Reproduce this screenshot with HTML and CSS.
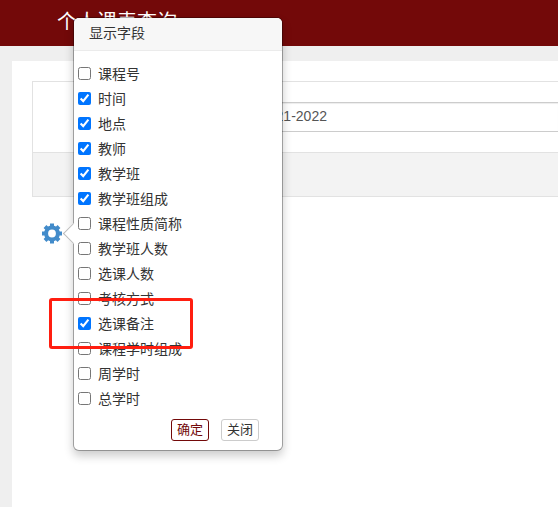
FILE: index.html
```html
<!DOCTYPE html>
<html lang="zh-CN">

<head>
    <meta charset="utf-8" />
    <title>个人课表查询</title>
    <link rel="stylesheet" href="styles.css">
</head>

<body>
    <header class="navbar">
        <h1>个人课表查询</h1>
    </header>
    <main class="page">
        <form class="search">
            <div class="search-body">
                <input class="year" type="text" value="2021-2022" aria-label="学年">
            </div>
            <div class="search-footer"></div>
        </form>
        <div class="setting">
            <button class="gear" type="button" aria-label="显示字段">
                <svg width="22" height="22" viewBox="0 0 22 22" fill="none" stroke="#428bca">
                    <circle cx="11" cy="10.500" r="5.900" stroke-width="4" />
                    <path stroke-width="4" d="M11 .5v4M11 16.500v4M1 10.500h4M17 10.500h4M4 3.500l3 3M15 14.500l3 3M18 3.500l-3 3M7 14.500l-3 3" />
                </svg>
            </button>
            <div class="popover">
                <h3>显示字段</h3>
                <ul class="fields">
                    <li><label><input type="checkbox">课程号</label></li>
                    <li><label><input type="checkbox" checked>时间</label></li>
                    <li><label><input type="checkbox" checked>地点</label></li>
                    <li><label><input type="checkbox" checked>教师</label></li>
                    <li><label><input type="checkbox" checked>教学班</label></li>
                    <li><label><input type="checkbox" checked>教学班组成</label></li>
                    <li><label><input type="checkbox">课程性质简称</label></li>
                    <li><label><input type="checkbox">教学班人数</label></li>
                    <li><label><input type="checkbox">选课人数</label></li>
                    <li><label><input type="checkbox">考核方式</label></li>
                    <li class="marked"><label><input type="checkbox" checked>选课备注</label></li>
                    <li><label><input type="checkbox">课程学时组成</label></li>
                    <li><label><input type="checkbox">周学时</label></li>
                    <li><label><input type="checkbox">总学时</label></li>
                </ul>
                <div class="actions">
                    <button class="btn btn-ok" type="button">确定</button>
                    <button class="btn" type="button">关闭</button>
                </div>
            </div>
        </div>
    </main>
</body>

</html>
```

FILE: styles.css
```css
*,
*::before,
*::after {
    box-sizing: border-box;
    margin: 0;
    padding: 0;
}

body {
    min-height: 100vh;
    display: flex;
    flex-direction: column;
    overflow-x: hidden;
    background: #efefef;
    color: #333;
    font-family: "Liberation Sans", "Noto Sans CJK SC", sans-serif;
    font-size: 14px;
    line-height: 20px;
}

.navbar {
    height: 46px;
    padding: 7px 57px;
    background: #730909;
    color: #fff;
}

.navbar h1 {
    font-size: 20px;
    font-weight: normal;
    line-height: 30px;
}

.page {
    flex: 1;
    margin: 15px 0 0 12px;
    padding: 20px 0 0 20px;
    background: #fff;
}

.search {
    border: 1px solid #e2e2e2;
    border-right: none;
}

.search-body {
    padding: 20px 0 20px 214px;
}

.year {
    display: block;
    width: 100%;
    height: 30px;
    padding: 0 12px 2px;
    border: 1px solid #ccc;
    border-right: none;
    box-shadow: inset 0 1px 1px rgba(0, 0, 0, 0.075);
    color: #555;
    font: inherit;
}

.search-footer {
    height: 44px;
    border-top: 1px solid #e2e2e2;
    background: #f3f3f3;
}

.setting {
    position: relative;
    width: 32px;
    margin: 26px 0 0 9px;
}

.gear {
    display: block;
    border: none;
    background: none;
    cursor: pointer;
}

.gear svg {
    display: block;
}

/* field picker, opens to the right of the gear */
.popover {
    position: absolute;
    left: 100%;
    top: 50%;
    transform: translateY(-50%);
    width: 210px;
    border: 1px solid rgba(0, 0, 0, 0.3);
    border-radius: 6px;
    background: #fff;
    background-clip: padding-box;
    box-shadow: 0 5px 10px rgba(0, 0, 0, 0.2);
}

.popover::before {
    content: "";
    position: absolute;
    left: -8px;
    top: 50%;
    width: 15px;
    height: 15px;
    margin-top: -8px;
    border: solid #bbb;
    border-width: 0 0 1px 1px;
    background: #fff;
    transform: rotate(45deg);
}

.popover h3 {
    padding: 5px 15px 7px;
    border-bottom: 1px solid #ebebeb;
    border-radius: 5px 5px 0 0;
    background: #f7f7f7;
    font-size: 14px;
    font-weight: normal;
}

.fields {
    position: relative;
    padding: 10px 4px 0;
    list-style: none;
}

.fields label {
    display: flex;
    align-items: center;
    gap: 7px;
    height: 25px;
}

.fields input {
    width: 13px;
    height: 13px;
}

.marked {
    position: relative;
}

.marked::after {
    content: "";
    position: absolute;
    left: -29px;
    top: -13px;
    width: 144px;
    height: 51px;
    border: 3px solid #ff1e10;
    border-radius: 3px;
    pointer-events: none;
}

.actions {
    display: flex;
    justify-content: flex-end;
    gap: 12px;
    padding: 8px 23px 9px;
}

.btn {
    height: 22px;
    padding: 0 5px;
    border: 1px solid #ccc;
    border-radius: 3px;
    background: #fff;
    color: #333;
    font: inherit;
    font-size: 13px;
    line-height: 20px;
    cursor: pointer;
}

.btn-ok {
    border-color: #730909;
    color: #730909;
}
```
